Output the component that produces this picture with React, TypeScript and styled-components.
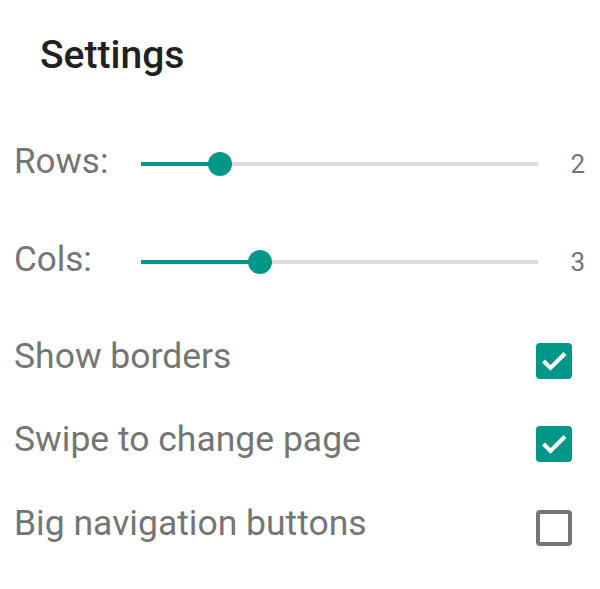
import React from "react";
import styled, { createGlobalStyle } from "styled-components";

const Global = createGlobalStyle`
  html, body { margin: 0; padding: 0; background: #ffffff; }
  body { font-family: Roboto, "Noto Sans", "Liberation Sans", sans-serif; }
`;

const Page = styled.div`
  width: 600px;
  height: 589px;
  background: #fff;
  display: flex;
  flex-direction: column;
  overflow: hidden;
`;

const Title = styled.h1`
  margin: 31px 0 0 0;
  padding-left: 40px;
  height: 48px;
  font-size: 39px;
  line-height: 48px;
  font-weight: 500;
  color: #212121;
`;

const SliderList = styled.div`
  margin-top: 36px;
  display: flex;
  flex-direction: column;
`;

const SliderRow = styled.div`
  height: 98px;
  display: flex;
  align-items: center;
  padding-left: 14px;
  padding-right: 15px;
`;

const SliderLabel = styled.div`
  width: 127px;
  flex: none;
  font-size: 35px;
  line-height: 40px;
  color: #757575;
  margin-bottom: 4px;
`;

const Track = styled.div`
  position: relative;
  width: 397px;
  height: 4px;
  background: #dcdcdc;
  flex: none;
`;

const Fill = styled.div`
  position: absolute;
  left: 0;
  top: 0;
  bottom: 0;
  background: #009688;
`;

const Thumb = styled.div`
  position: absolute;
  top: 50%;
  width: 24px;
  height: 24px;
  border-radius: 50%;
  background: #009688;
  transform: translate(-50%, -50%);
`;

const Value = styled.div`
  flex: 1;
  text-align: right;
  font-size: 26px;
  line-height: 30px;
  color: #757575;
`;

const CheckList = styled.div`
  margin-top: 8px;
  display: flex;
  flex-direction: column;
`;

const CheckRow = styled.div`
  height: 83.5px;
  display: flex;
  align-items: center;
  justify-content: space-between;
  padding-left: 14px;
  padding-right: 28px;
`;

const CheckLabel = styled.div`
  font-size: 35.5px;
  line-height: 40px;
  color: #757575;
  margin-bottom: 10px;
`;

const Box = styled.div<{ $checked: boolean }>`
  width: 36px;
  height: 36px;
  box-sizing: border-box;
  border-radius: 4px;
  background: ${(p) => (p.$checked ? "#009688" : "transparent")};
  border: ${(p) => (p.$checked ? "none" : "4px solid #757575")};
  display: flex;
  align-items: center;
  justify-content: center;
`;

function Slider({ label, value, max }: { label: string; value: number; max: number }) {
  const pct = (value / max) * 100;
  return (
    <SliderRow>
      <SliderLabel>{label}</SliderLabel>
      <Track>
        <Fill style={{ width: `${pct}%` }} />
        <Thumb style={{ left: `${pct}%` }} />
      </Track>
      <Value>{value}</Value>
    </SliderRow>
  );
}

function Check({ label, checked }: { label: string; checked: boolean }) {
  return (
    <CheckRow>
      <CheckLabel>{label}</CheckLabel>
      <Box $checked={checked}>
        {checked && (
          <svg width="36" height="36" viewBox="0 0 36 36">
            <polyline
              points="7.5,18 14.5,25 29,10.5"
              fill="none"
              stroke="#fff"
              strokeWidth="4"
            />
          </svg>
        )}
      </Box>
    </CheckRow>
  );
}

export default function App() {
  return (
    <Page>
      <Global />
      <Title>Settings</Title>
      <SliderList>
        <Slider label="Rows:" value={2} max={10} />
        <Slider label="Cols:" value={3} max={10} />
      </SliderList>
      <CheckList>
        <Check label="Show borders" checked />
        <Check label="Swipe to change page" checked />
        <Check label="Big navigation buttons" checked={false} />
      </CheckList>
    </Page>
  );
}
